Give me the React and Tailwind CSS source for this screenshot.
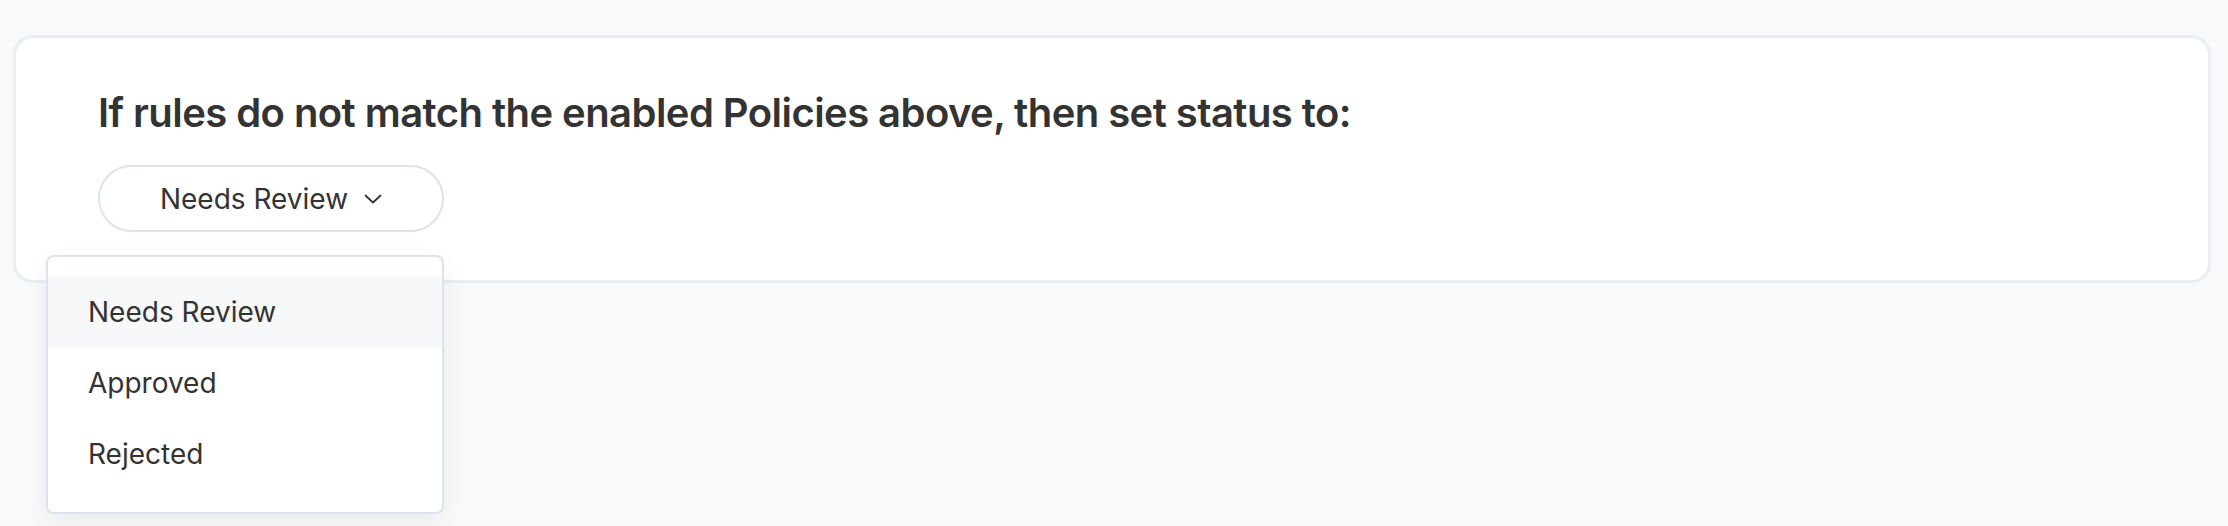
import React from "react";

const options = ["Needs Review", "Approved", "Rejected"];

const Chevron = () => (
  <svg width="18" height="10" viewBox="0 0 18 10" fill="none">
    <path d="M1.5 1.5L9 8.5L16.5 1.5" stroke="#333" strokeWidth="1.8" strokeLinecap="round" strokeLinejoin="round" />
  </svg>
);

const StatusSelect = () => {
  return (
    <div className="relative inline-block">
      <button className="flex items-center gap-4 h-[67px] w-[346px] justify-center rounded-full border-2 border-[#dde2ec] bg-white text-[28px] text-[#333]">
        <span>Needs Review</span>
        <Chevron />
      </button>
      <div className="absolute right-0 top-[calc(100%+23px)] w-[398px] rounded-[8px] border-2 border-[#dde2ec] bg-white pt-[19px] pb-[23px] shadow-[0_8px_24px_rgba(15,23,42,0.06)] z-10">
        {options.map((opt, i) => (
          <div
            key={opt}
            className={
              "flex items-center h-[71px] pl-[40px] text-[28px] text-[#333] " +
              (i === 0 ? "bg-[#f7f8fa]" : "")
            }
          >
            {opt}
          </div>
        ))}
      </div>
    </div>
  );
};

export default function App() {
  return (
    <div
      className="min-h-screen bg-[#f8f9fb] pt-[35px] pl-[13px] pr-[17px]"
      style={{ fontFamily: "Inter, 'Noto Sans', sans-serif" }}
    >
      <div className="rounded-[20px] border-[3px] border-[#eaedf2] bg-white pl-[82px] pt-[51px] pb-[48px]">
        <h2 className="text-[40px] leading-[48px] font-semibold tracking-[-0.014em] text-[#333]">
          If rules do not match the enabled Policies above, then set status to:
        </h2>
        <div className="mt-[28px]">
          <StatusSelect />
        </div>
      </div>
    </div>
  );
}
